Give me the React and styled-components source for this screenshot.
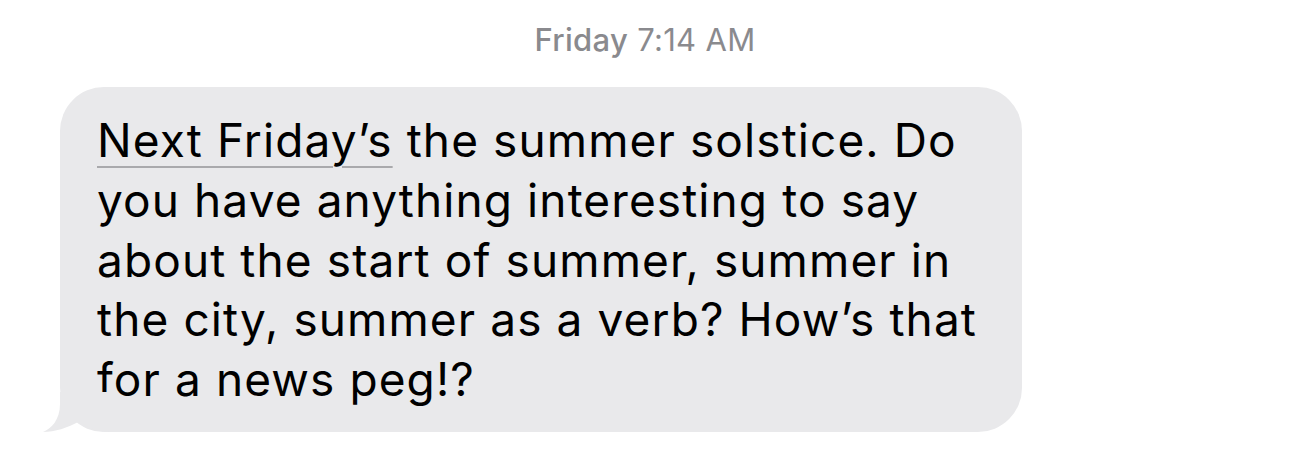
import React from "react";
import styled, { createGlobalStyle } from "styled-components";

const GlobalStyle = createGlobalStyle`
  html, body {
    margin: 0;
    padding: 0;
    background: #ffffff;
  }
  body {
    font-family: Inter, "Noto Sans", "Liberation Sans", sans-serif;
    -webkit-font-smoothing: antialiased;
  }
`;

const Thread = styled.div`
  width: 1290px;
  height: 472px;
  box-sizing: border-box;
  padding-top: 20px;
  display: flex;
  flex-direction: column;
`;

const Stamp = styled.div`
  text-align: center;
  font-size: 31px;
  line-height: 40px;
  color: #8a8a8e;
  letter-spacing: 0.01em;
  b {
    font-weight: 500;
  }
  span {
    font-weight: 400;
  }
`;

const Row = styled.div`
  display: flex;
  padding-left: 60px;
  margin-top: 27px;
`;

const Bubble = styled.div`
  position: relative;
  width: 962px;
  box-sizing: border-box;
  padding: 24px 30px 22px 37px;
  background: #e9e9eb;
  border-radius: 44px;
  color: #000;
  font-size: 46px;
  line-height: 59.8px;
  letter-spacing: 1.1px;
`;

const Tail = styled.svg`
  position: absolute;
  left: -17px;
  bottom: 0;
  width: 70px;
  height: 40px;
  display: block;
`;

const DateLink = styled.span`
  text-decoration: underline;
  text-decoration-color: #a9a9ac;
  text-decoration-thickness: 2px;
  text-underline-offset: 9px;
  text-decoration-skip-ink: auto;
`;

const lines = [
  "you have anything interesting to say",
  "about the start of summer, summer in",
  "the city, summer as a verb? How\u2019s that",
  "for a news peg!?",
];

export default function App() {
  return (
    <>
      <GlobalStyle />
      <Thread>
        <Stamp>
          <b>Friday</b> <span>7:14 AM</span>
        </Stamp>
        <Row>
          <Bubble>
            <Tail viewBox="0 0 70 40">
              <path
                d="M17 0 L17 12 C17 28 8 37 0 40 C12 40 24 36 37 29 C46 37 56 40 70 40 L70 0 Z"
                fill="#e9e9eb"
              />
            </Tail>
            <DateLink>Next Friday’s</DateLink> the summer solstice. Do
            {lines.map((l) => (
              <React.Fragment key={l}>
                <br />
                {l}
              </React.Fragment>
            ))}
          </Bubble>
        </Row>
      </Thread>
    </>
  );
}
